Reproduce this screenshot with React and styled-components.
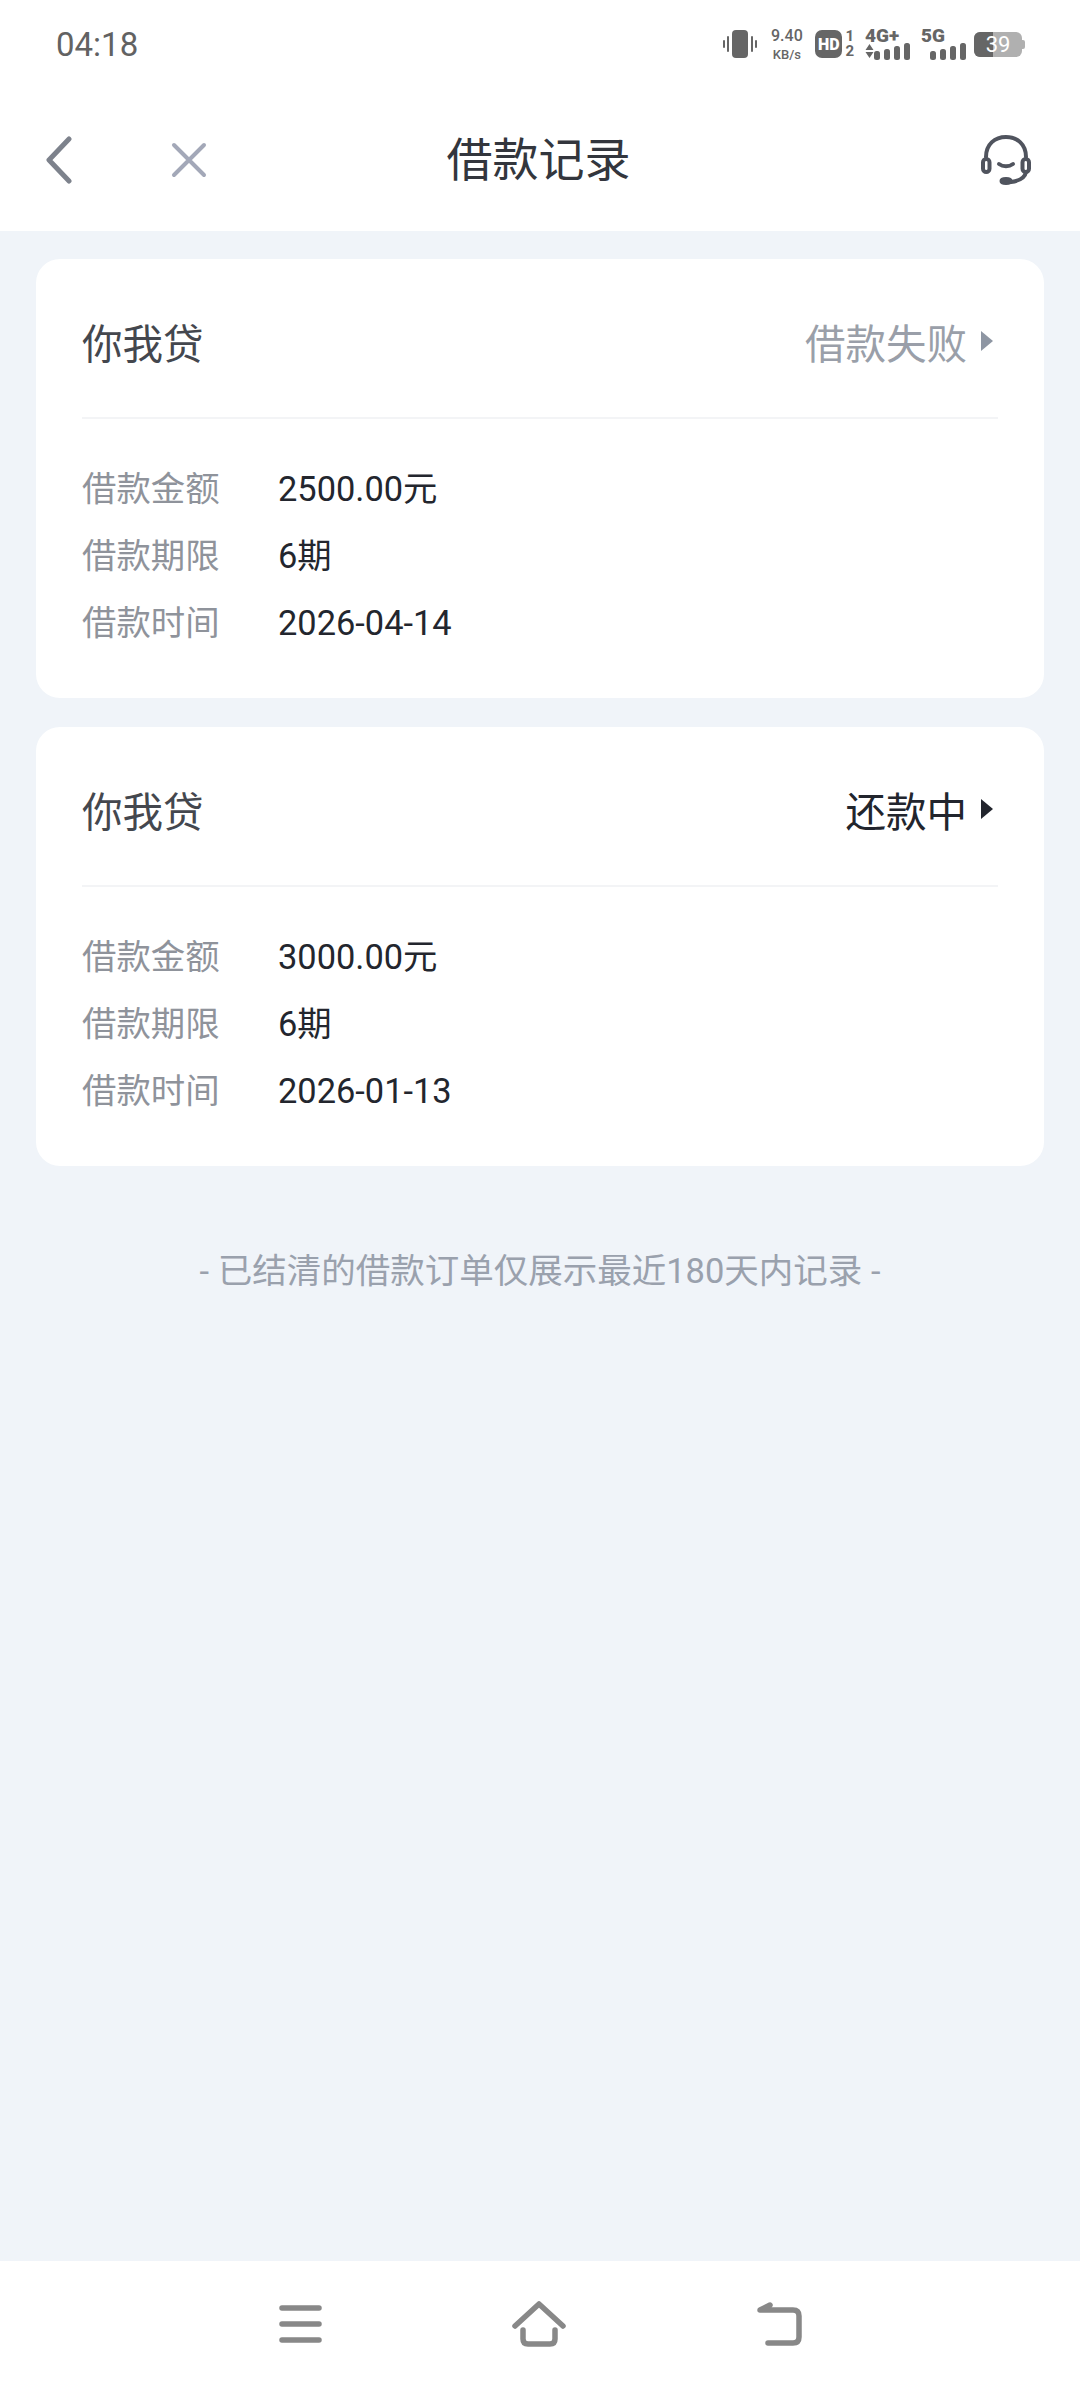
import styled, { createGlobalStyle } from 'styled-components'

const loans = [
  { amount: '2500.00元', term: '6期', date: '2026-04-14', status: '借款失败', failed: true },
  { amount: '3000.00元', term: '6期', date: '2026-01-13', status: '还款中', failed: false },
]

const Signal = () => (
  <svg width="36" height="17" viewBox="0 0 36 17" fill="#666">
    <rect x="0" y="8" width="6" height="9" rx="2.5" />
    <rect x="10" y="6" width="6" height="11" rx="2.5" />
    <rect x="20" y="3" width="6" height="14" rx="2.5" />
    <rect x="30" y="0" width="6" height="17" rx="2.5" />
  </svg>
)

const App = () => (
  <Page>
    <GlobalStyle />
    <Top>
      <StatusBar>
        <Time>04:18</Time>
        <StatusIcons>
          <svg width="34" height="28" viewBox="0 0 34 28" fill="#666">
            <rect x="9" y="0" width="16" height="28" rx="4" />
            <rect x="0" y="10" width="2" height="8" rx="1" />
            <rect x="4" y="6" width="2" height="16" rx="1" />
            <rect x="28" y="6" width="2" height="16" rx="1" />
            <rect x="32" y="10" width="2" height="8" rx="1" />
          </svg>
          <Speed>
            <b>9.40</b>
            <span>KB/s</span>
          </Speed>
          <Sim>
            <HdBadge>HD</HdBadge>
            <SimSlots>
              <span>1</span>
              <span>2</span>
            </SimSlots>
          </Sim>
          <Network>
            <NetLabel>4G+</NetLabel>
            <NetBars>
              <svg width="9" height="16" viewBox="0 0 9 16" fill="#666">
                <path d="M4.5 1 8.5 7H.5zM.5 9h8l-4 6z" />
              </svg>
              <Signal />
            </NetBars>
          </Network>
          <Network>
            <NetLabel>5G</NetLabel>
            <NetBars>
              <Spacer />
              <Signal />
            </NetBars>
          </Network>
          <Battery>
            <BatteryBody>
              <BatteryFill />
              <BatteryLevel>39</BatteryLevel>
            </BatteryBody>
            <BatteryTip />
          </Battery>
        </StatusIcons>
      </StatusBar>
      <NavBar>
        <NavLeft>
          <svg width="26" height="48" viewBox="0 0 26 48" fill="none" stroke="#7d828c" strokeWidth="5" strokeLinecap="round" strokeLinejoin="round">
            <path d="M23 3 3 24l20 21" />
          </svg>
          <svg width="36" height="36" viewBox="0 0 36 36" fill="none" stroke="#a3a8b8" strokeWidth="4" strokeLinecap="round">
            <path d="M3 3l30 30M33 3 3 33" />
          </svg>
        </NavLeft>
        <Title>借款记录</Title>
        <NavRight>
          <svg width="50" height="50" viewBox="0 0 50 50" fill="none" stroke="#50545e" strokeWidth="4" strokeLinecap="round">
            <path d="M5 22C5 9 14 2 25 2s20 7 20 20" />
            <rect x="2" y="24" width="6.5" height="13" rx="3.25" />
            <rect x="41.5" y="24" width="6.5" height="13" rx="3.25" />
            <path d="M18 29c4 3 10 3 14 0" />
            <path d="M45 37c-1 6-8 9-15 10" />
            <ellipse cx="25" cy="46" rx="4.5" ry="2" fill="#50545e" />
          </svg>
        </NavRight>
      </NavBar>
    </Top>
    <Content>
      {loans.map((loan) => (
        <Card key={loan.date}>
          <CardHead>
            <Product>你我贷</Product>
            <Status $failed={loan.failed}>
              {loan.status}
              <Caret $failed={loan.failed} />
            </Status>
          </CardHead>
          <CardBody>
            <Row>
              <Label>借款金额</Label>
              <Value>{loan.amount}</Value>
            </Row>
            <Row>
              <Label>借款期限</Label>
              <Value>{loan.term}</Value>
            </Row>
            <Row>
              <Label>借款时间</Label>
              <Value>{loan.date}</Value>
            </Row>
          </CardBody>
        </Card>
      ))}
      <Note>- 已结清的借款订单仅展示最近180天内记录 -</Note>
    </Content>
    <BottomBar>
      <svg width="43" height="38" viewBox="0 0 43 38" fill="none" stroke="#888" strokeWidth="5.5" strokeLinecap="round">
        <path d="M3 3h37M3 19h37M3 35h37" />
      </svg>
      <svg width="54" height="46" viewBox="0 0 54 46" fill="none" stroke="#888" strokeWidth="5.5" strokeLinecap="round" strokeLinejoin="round">
        <path d="M3 25 27 3l24 22" />
        <path d="M11 29v9q0 5 5 5h22q5 0 5-5v-9" />
      </svg>
      <svg width="46" height="44" viewBox="0 0 46 44" fill="none" stroke="#888" strokeWidth="5.5" strokeLinecap="round" strokeLinejoin="round">
        <path d="M12 41h25q6 0 6-6V14q0-6-6-6H4l10-5" />
      </svg>
    </BottomBar>
  </Page>
)

export default App

const GlobalStyle = createGlobalStyle`
  html, body {
    margin: 0;
    padding: 0;
    background: #f0f4f9;
  }
  * {
    box-sizing: border-box;
  }
`

const Page = styled.div`
  width: 1080px;
  height: 2388px;
  display: flex;
  flex-direction: column;
  background: #f0f4f9;
  font-family: Roboto, 'Noto Sans CJK SC', sans-serif;
`

const Top = styled.header`
  background: #fff;
  height: 231px;
  flex-shrink: 0;
`

const StatusBar = styled.div`
  height: 90px;
  padding: 0 55px 2px 56px;
  display: flex;
  align-items: center;
  justify-content: space-between;
`

const Time = styled.span`
  font-size: 33px;
  font-weight: 450;
  color: #626262;
`

const StatusIcons = styled.div`
  display: flex;
  align-items: center;
`

const Speed = styled.div`
  margin-left: 13px;
  width: 33px;
  display: flex;
  flex-direction: column;
  align-items: center;
  color: #666;
  line-height: 1;

  b {
    font-size: 16px;
    font-weight: 500;
  }
  span {
    margin-top: 4px;
    font-size: 13px;
    font-weight: 500;
  }
`

const Sim = styled.div`
  margin-left: 12px;
  display: flex;
  align-items: center;
  gap: 3px;
`

const HdBadge = styled.span`
  width: 27px;
  height: 28px;
  border-radius: 7px;
  background: #666;
  color: #fff;
  font-size: 16px;
  font-weight: 900;
  display: flex;
  align-items: center;
  justify-content: center;
`

const SimSlots = styled.div`
  display: flex;
  flex-direction: column;
  align-items: center;
  color: #666;
  font-size: 15px;
  font-weight: 700;
  line-height: 15px;
`

const Network = styled.div`
  margin-left: 11px;
  display: flex;
  flex-direction: column;
  color: #666;
`

const NetLabel = styled.span`
  font-size: 19px;
  font-weight: 900;
  line-height: 14px;
  height: 14px;
`

const NetBars = styled.div`
  display: flex;
  align-items: center;
  gap: 0;
`

const Spacer = styled.span`
  width: 9px;
`

const Battery = styled.div`
  margin-left: 8px;
  display: flex;
  align-items: center;
`

const BatteryBody = styled.div`
  position: relative;
  width: 48px;
  height: 25px;
  border-radius: 6px;
  background: #b0b0b0;
  overflow: hidden;
`

const BatteryFill = styled.div`
  width: 19px;
  height: 100%;
  background: #666;
`

const BatteryLevel = styled.span`
  position: absolute;
  inset: 0;
  display: flex;
  align-items: center;
  justify-content: center;
  font-size: 22px;
  color: #fff;
`

const BatteryTip = styled.i`
  width: 3px;
  height: 9px;
  border-radius: 0 2px 2px 0;
  background: #b0b0b0;
`

const NavBar = styled.nav`
  height: 141px;
  display: grid;
  grid-template-columns: 1fr auto 1fr;
  align-items: center;
  padding: 0 49px 2px 46px;
`

const NavLeft = styled.div`
  display: flex;
  align-items: center;
  gap: 99px;
`

const NavRight = styled.div`
  display: flex;
  justify-content: flex-end;
`

const Title = styled.h1`
  margin: 0;
  font-size: 46px;
  font-weight: 400;
  color: #33363d;
  line-height: 1;
`

const Content = styled.main`
  flex: 1;
  padding: 28px 36px 0;
  display: flex;
  flex-direction: column;
  gap: 29px;
`

const Card = styled.section`
  height: 439px;
  padding: 0 46px;
  background: #fff;
  border-radius: 24px;
`

const CardHead = styled.div`
  height: 160px;
  padding-top: 6px;
  display: flex;
  align-items: center;
  justify-content: space-between;
  border-bottom: 2px solid #f3f4f6;
`

const Product = styled.span`
  font-size: 40.5px;
  color: #44474e;
`

const Status = styled.span`
  display: flex;
  align-items: center;
  gap: 14px;
  font-size: 40.5px;
  color: ${(p) => (p.$failed ? '#9a9fa9' : '#22252d')};
`

const Caret = styled.i`
  width: 0;
  height: 0;
  margin-right: 5px;
  border-left: 12px solid ${(p) => (p.$failed ? '#8e96a3' : '#22252d')};
  border-top: 10px solid transparent;
  border-bottom: 10px solid transparent;
`

const CardBody = styled.div`
  padding-top: 37px;
  display: flex;
  flex-direction: column;
`

const Row = styled.div`
  height: 67px;
  display: flex;
  align-items: center;
  font-size: 34.4px;
  line-height: 67px;
`

const Label = styled.span`
  width: 196px;
  color: #8f939b;
`

const Value = styled.span`
  color: #23262e;
`

const Note = styled.p`
  margin: 46px 0 0;
  text-align: center;
  font-size: 34.5px;
  line-height: 60px;
  color: #9aa1ad;
`

const BottomBar = styled.footer`
  height: 127px;
  flex-shrink: 0;
  background: #fff;
  padding-bottom: 2px;
  display: flex;
  align-items: center;
  justify-content: center;
  gap: 190px;
`
